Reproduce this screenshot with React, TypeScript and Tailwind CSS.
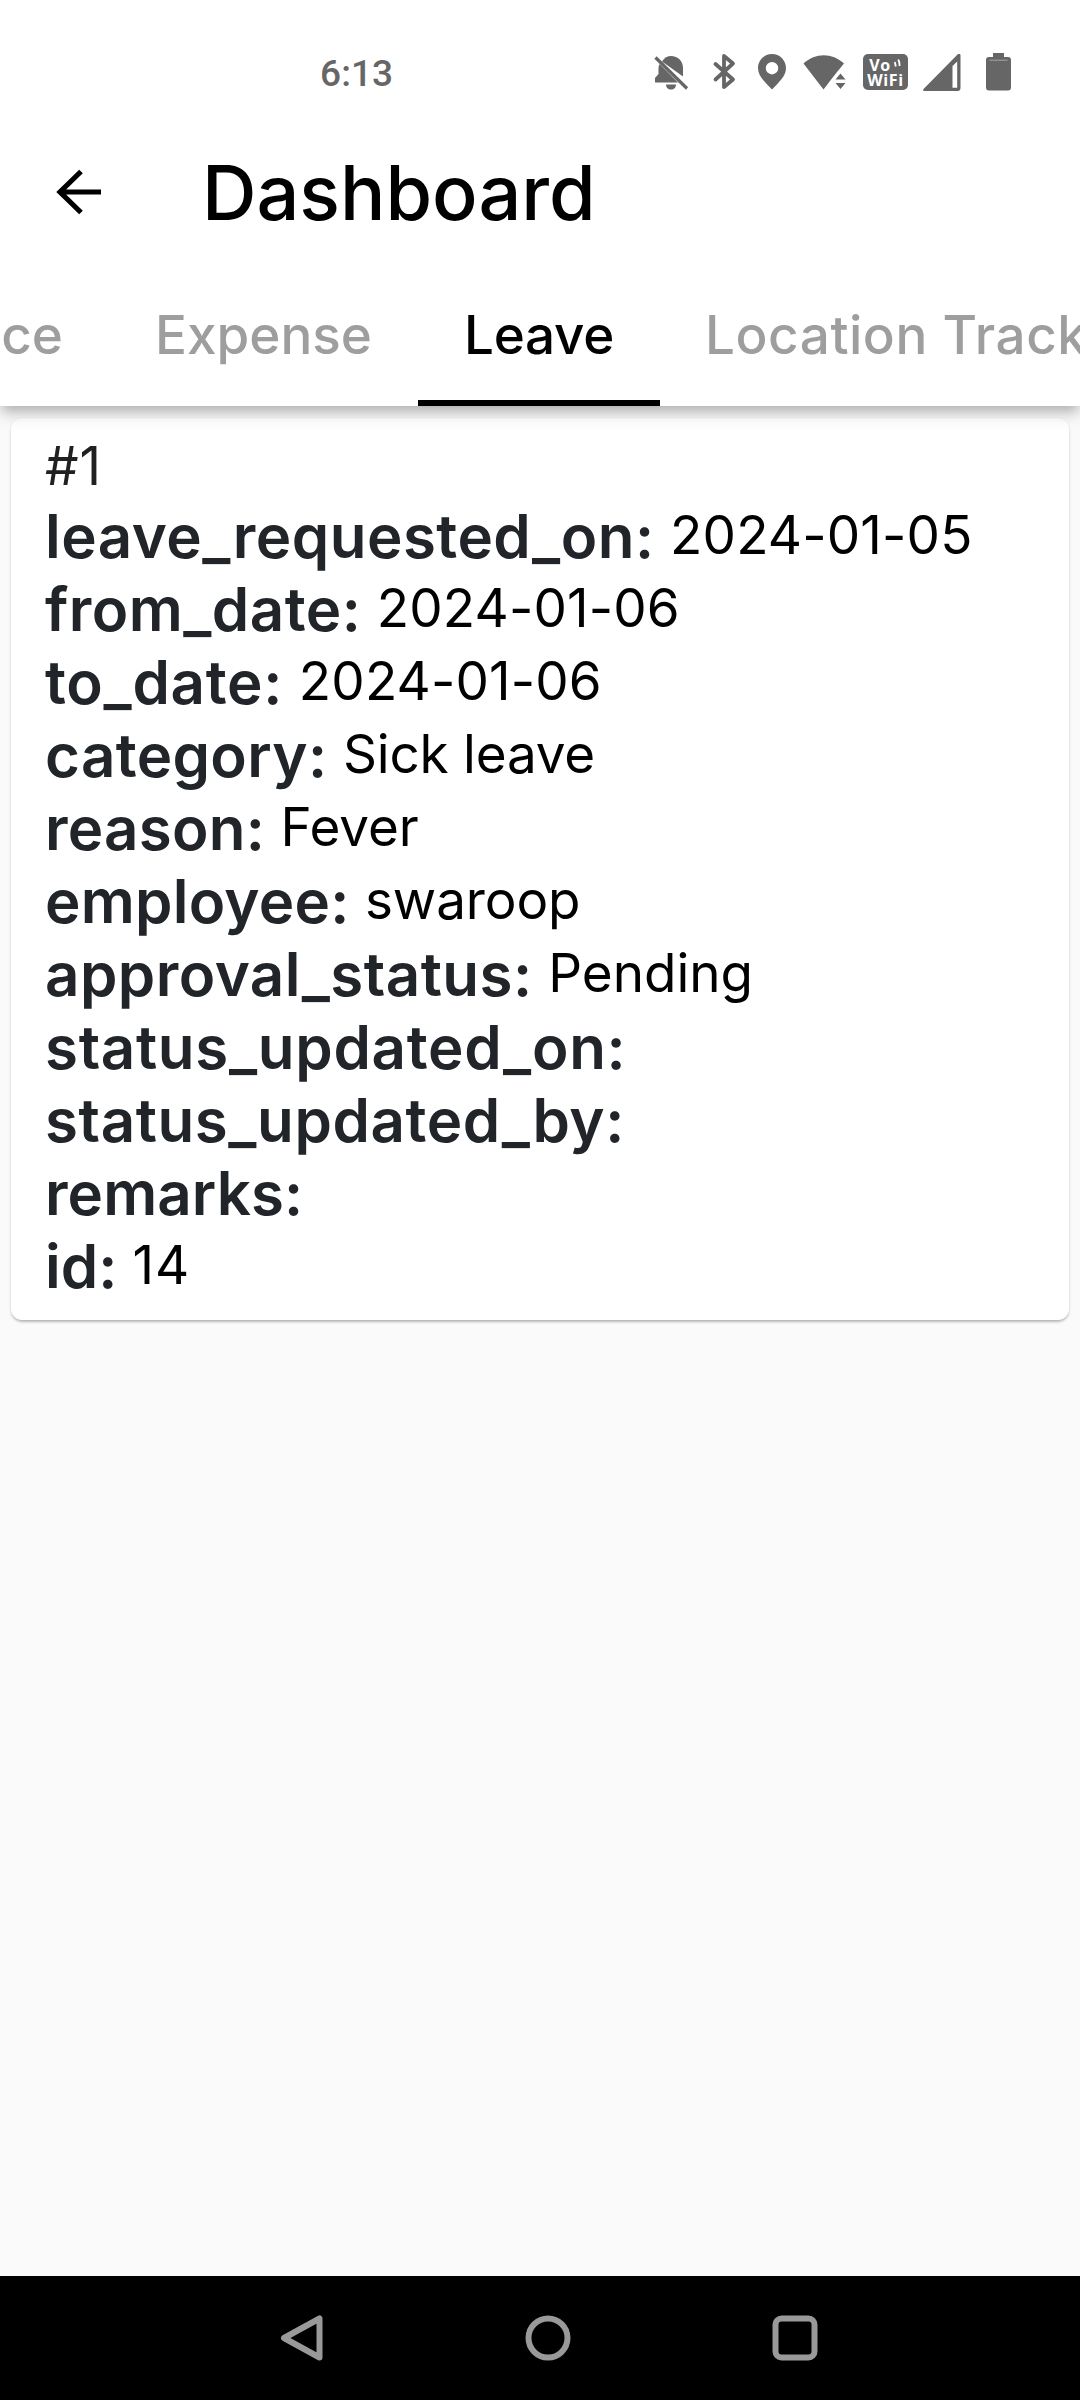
const tabs = [
  { label: 'ce', className: 'w-[109px] justify-end pr-[46px] text-[#9e9e9e]' },
  { label: 'Expense', className: 'w-[309px] justify-center text-[#9e9e9e]' },
  { label: 'Leave', className: 'w-[242px] justify-center tracking-[-0.3px] text-black' },
  { label: 'Location Tracking', className: 'w-[540px] pl-[45px] tracking-[0.55px] text-[#9e9e9e]' },
];

const fields = [
  { name: 'leave_requested_on', value: '2024-01-05', className: 'tracking-[0.48px]', valueClassName: 'tracking-[0.15px]' },
  { name: 'from_date', value: '2024-01-06', className: 'tracking-[0.46px]', valueClassName: 'tracking-[0.15px]' },
  { name: 'to_date', value: '2024-01-06', className: 'tracking-[0.7px]', valueClassName: 'tracking-[0.15px]' },
  { name: 'category', value: 'Sick leave', className: 'tracking-[0.35px]', valueClassName: 'tracking-[-0.2px]' },
  { name: 'reason', value: 'Fever', className: 'tracking-[0.25px]', valueClassName: 'tracking-[-0.1px]' },
  { name: 'employee', value: 'swaroop', className: 'tracking-[0.25px]', valueClassName: 'tracking-[-0.1px]' },
  { name: 'approval_status', value: 'Pending', className: 'tracking-[0.48px]', valueClassName: 'tracking-normal' },
  { name: 'status_updated_on', value: '', className: 'tracking-[0.7px]', valueClassName: '' },
  { name: 'status_updated_by', value: '', className: 'tracking-[0.6px]', valueClassName: '' },
  { name: 'remarks', value: '', className: 'tracking-[0.1px]', valueClassName: '' },
  { name: 'id', value: '14', className: 'tracking-normal', valueClassName: 'tracking-[1px]' },
];

function StatusBar() {
  return (
    <div className="flex h-[144px] shrink-0 items-start pl-[320px] text-[#666]">
      <span className="mt-[52px] w-[332px] font-['Roboto'] text-[37px] leading-[44px] font-medium tracking-[0.1px]">
        6:13
      </span>

      {/* notifications off */}
      <svg className="mt-[54px]" width="38" height="38" viewBox="0 0 38 38" fill="currentColor">
        <path d="M10 7.5C12.5 3.8 15.5 2 19 2c7 0 12 5 12 12v8.5z" />
        <path d="M7.500 10L26 28.500H3V24l3.500-4v-5c0-2 .3-3.500 1-5z" />
        <path d="M14 30.500h10c0 3-2 5-5 5s-5-2-5-5z" />
        <path d="M3.500 3.500L35 34.500" stroke="currentColor" strokeWidth="3.200" />
      </svg>

      {/* bluetooth */}
      <svg className="mt-[52px] ml-[21px]" width="28" height="40" viewBox="0 0 28 40" fill="none" stroke="currentColor" strokeWidth="3.800" strokeLinejoin="round" strokeLinecap="round">
        <path d="M4.500 12L22 27.500l-9 7.500V4l9 7.500L4.500 27.500" />
      </svg>

      {/* location */}
      <svg className="mt-[54px] ml-[19px]" width="28" height="36" viewBox="0 0 28 36" fill="currentColor" fillRule="evenodd">
        <path d="M14 0C6.300 0 0 6.200 0 14c0 8.500 7.500 14.500 14 21.500C20.500 28.500 28 22.500 28 14 28 6.200 21.700 0 14 0zm0 8a6.200 6.200 0 1 1 0 12.400A6.200 6.200 0 0 1 14 8z" />
      </svg>

      {/* wifi */}
      <svg className="mt-[54px] ml-[17px]" width="44" height="36" viewBox="0 0 44 36" fill="currentColor">
        <path d="M.5 9.500C12.500-1.500 29-1.500 41 9.500L34 18l-5.500 7L20.500 35.500z" />
        <path d="M32.500 25.500l5-6 5 6zM32.500 29h10l-5 6z" />
      </svg>

      {/* VoWiFi badge */}
      <div className="mt-[54px] ml-[16px] flex h-[36px] w-[45px] flex-col items-center justify-center rounded-[5px] bg-[#666] font-['Open_Sans'] text-[16px] leading-[16px] font-bold text-white">
        <div className="flex h-[15px] items-start gap-[3px]">
          <span className="tracking-[0.5px]">Vo</span>
          <svg className="mt-[2px]" width="8" height="8" viewBox="0 0 8 8" fill="none" stroke="#fff" strokeWidth="1.800">
            <path d="M.8 3l1 4.500M4.200.5c1.200 2 1.500 4 1.300 6.500" />
          </svg>
        </div>
        <div className="tracking-[0.6px]">WiFi</div>
      </div>

      {/* mobile signal */}
      <svg className="mt-[54px] ml-[15px]" width="38" height="37" viewBox="0 0 38 37" fill="currentColor">
        <path d="M35 0c1.500-.8 2.500 0 2.500 1.500V34c0 2-1 3-3 3H2c-2 0-2.600-1-1.200-2.300z" />
        <path d="M29.500 12l4.700-4.500V33.700h-4.700z" fill="#fff" />
      </svg>

      {/* battery */}
      <svg className="mt-[53px] ml-[25px]" width="25" height="38" viewBox="0 0 25 38" fill="currentColor">
        <path d="M7 0h11v4h4c2 0 3 1 3 3v27.500c0 2-1 3-3 3H3c-2 0-3-1-3-3V7c0-2 1-3 3-3h4z" />
        <path d="M3.500 7.200h18" stroke="#a5a5a5" />
      </svg>
    </div>
  );
}

function AppBar() {
  return (
    <div className="flex h-[98px] shrink-0 items-center">
      <svg className="mb-[2px] ml-[56px]" width="46" height="46" viewBox="0 0 46 46" fill="none" stroke="#000" strokeWidth="5.200">
        <path d="M45 23H4M25 2.500L4 23l21 20.500" />
      </svg>
      <h1 className="ml-[100px] text-[75.5px] leading-[96px] font-medium whitespace-nowrap text-black">
        Dashboard
      </h1>
    </div>
  );
}

function TabBar() {
  return (
    <div className="flex h-[164px] shrink-0 items-end text-[53px] font-medium whitespace-nowrap">
      {tabs.map((tab) => (
        <div key={tab.label} className="shrink-0">
          <div className={`flex h-[132px] items-center ${tab.className}`}>
            <span className="pt-[3px]">{tab.label}</span>
          </div>
          <div className={tab.label === 'Leave' ? 'h-[6px] bg-black' : 'h-[6px]'} />
        </div>
      ))}
    </div>
  );
}

function NavBar() {
  return (
    <div className="flex h-[124px] shrink-0 items-center bg-black pl-[279px]">
      <svg width="46" height="48" viewBox="0 0 46 48" fill="none" stroke="#999" strokeWidth="6" strokeLinejoin="round">
        <path d="M40.500 4.500v39L5 24z" />
      </svg>
      <svg className="ml-[199px]" width="48" height="48" viewBox="0 0 48 48" fill="none" stroke="#999" strokeWidth="6">
        <circle cx="24" cy="24" r="19.500" />
      </svg>
      <svg className="ml-[199px]" width="48" height="48" viewBox="0 0 48 48" fill="none" stroke="#999" strokeWidth="6">
        <rect x="4.500" y="4.500" width="39" height="39" rx="6" />
      </svg>
    </div>
  );
}

export default function App() {
  return (
    <div className="flex h-[2400px] w-[1080px] flex-col overflow-hidden bg-[#fafafa] font-['Inter',sans-serif]">
      <header className="z-10 flex h-[406px] shrink-0 flex-col bg-white shadow-[0_6px_11px_-3px_rgba(0,0,0,0.2),0_11px_14px_0_rgba(0,0,0,0.1),0_3px_16px_0_rgba(0,0,0,0.06)]">
        <StatusBar />
        <AppBar />
        <TabBar />
      </header>

      <main className="flex-1 px-[11px] pt-[12px]">
        <div className="h-[902px] rounded-[11px] bg-white pt-[11px] pl-[34px] shadow-[0_3px_3px_-1px_rgba(0,0,0,0.2),0_1px_3px_0_rgba(0,0,0,0.14)]">
          <p className="h-[71px] text-[53px] leading-[74px] tracking-[1px] text-[#212121]">#1</p>
          {fields.map((field) => (
            <div key={field.name} className="flex h-[73px] whitespace-pre">
              <span className={`text-[60px] leading-[73px] font-semibold text-[#212529] ${field.className}`}>
                {field.name}:{' '}
              </span>
              <span className={`text-[53px] leading-[70px] text-black ${field.valueClassName}`}>
                {field.value}
              </span>
            </div>
          ))}
        </div>
      </main>

      <NavBar />
    </div>
  );
}
